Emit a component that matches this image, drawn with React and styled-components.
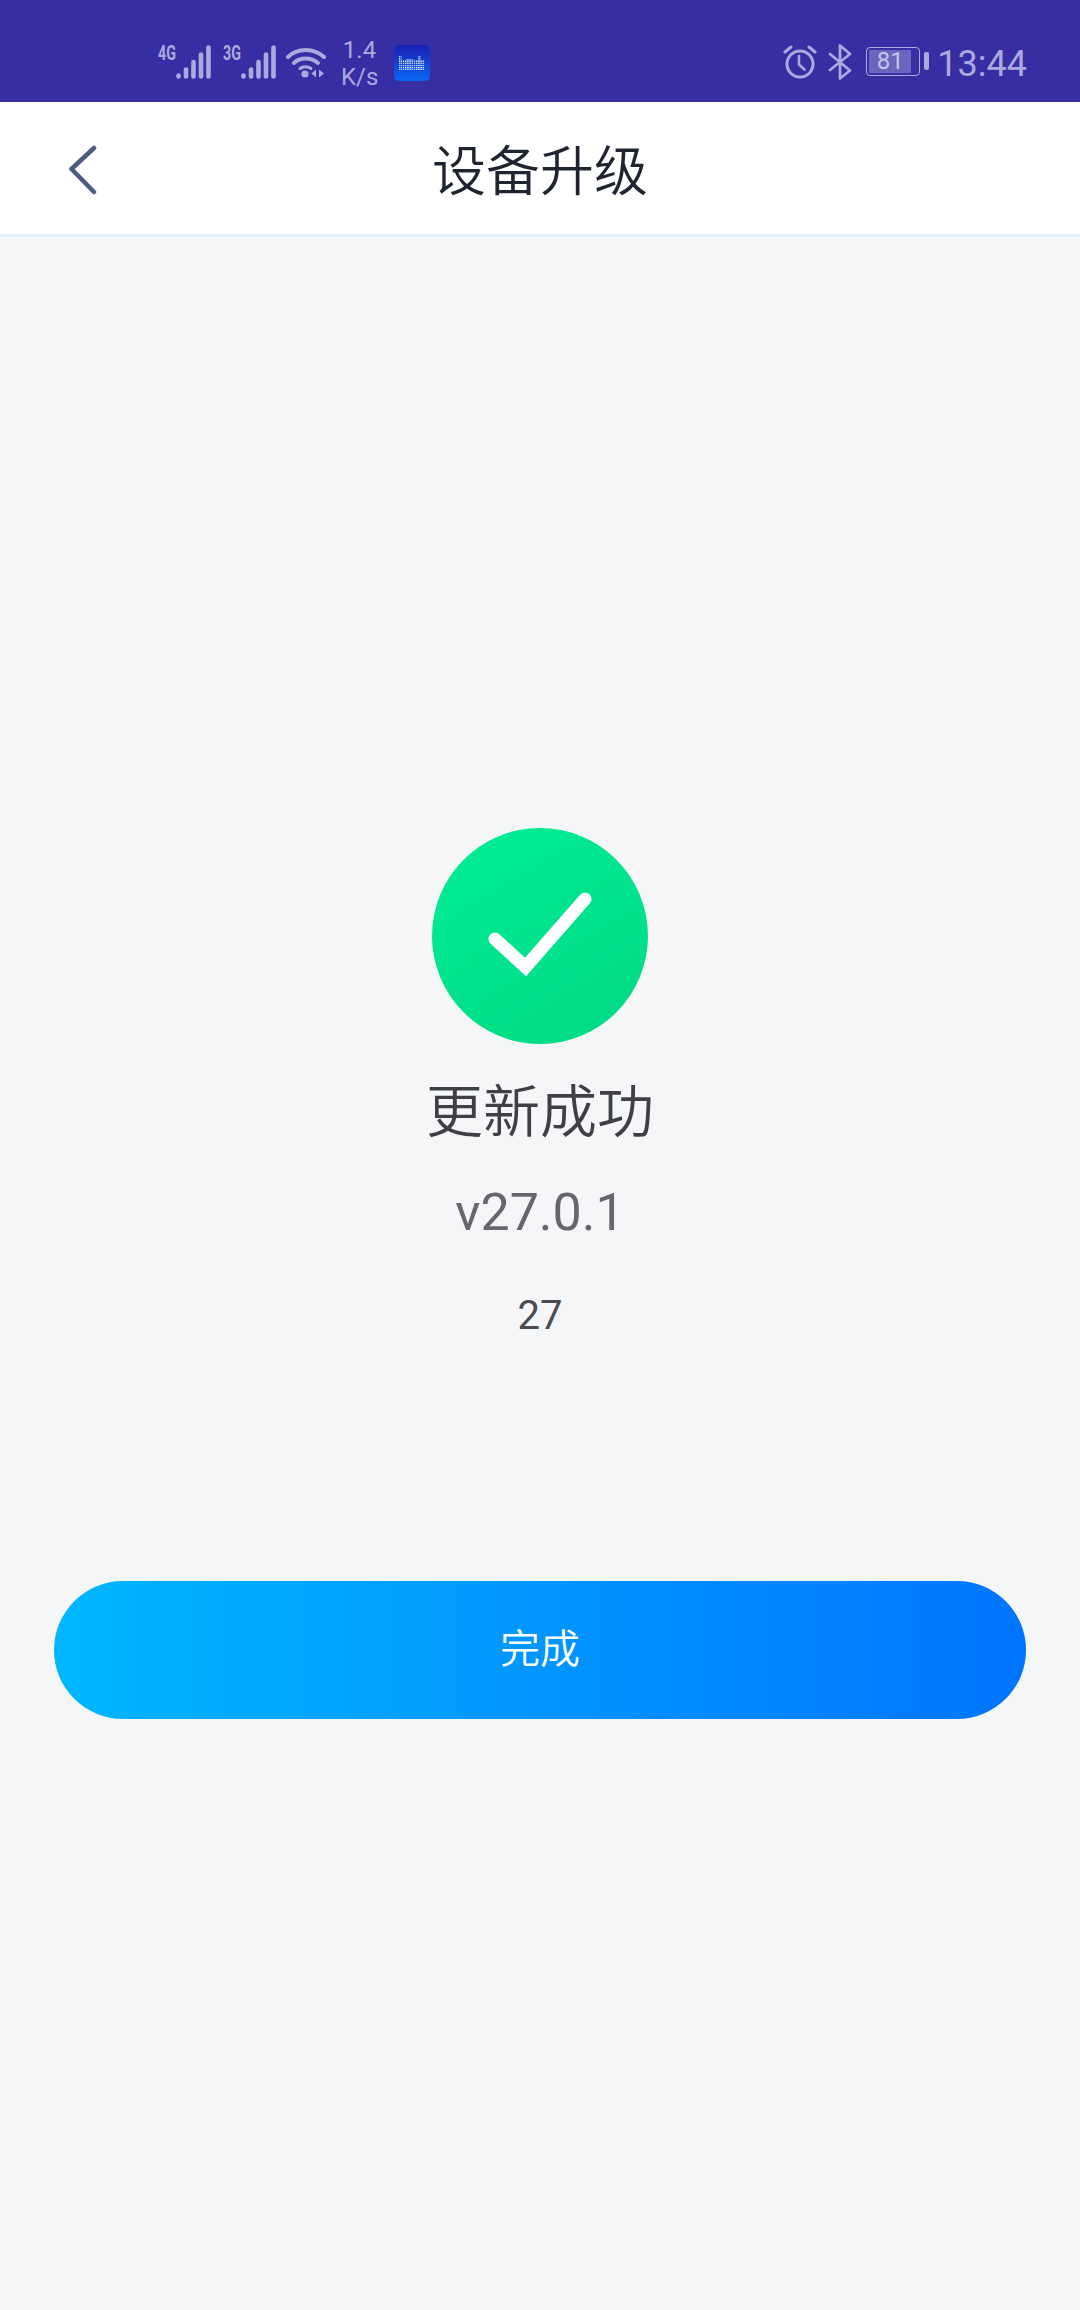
import React from "react";
import styled, { createGlobalStyle } from "styled-components";

const Global = createGlobalStyle`
  html, body { margin: 0; padding: 0; background: #f4f6f8; }
  body { font-family: Roboto, "Noto Sans CJK SC", sans-serif; }
  * { box-sizing: border-box; }
`;

const Page = styled.div`
  width: 1080px;
  height: 2310px;
  display: flex;
  flex-direction: column;
  background: #f4f6f8;
  overflow: hidden;
`;

const StatusBar = styled.div`
  height: 102px;
  flex: none;
  background: #382ea3;
  color: #aaaade;
  display: flex;
  justify-content: space-between;
  padding: 40px 54px 0 158px;
`;

const StatusGroup = styled.div`
  display: flex;
  align-items: flex-start;
`;

const SignalBlock = styled.div`
  display: flex;
  align-items: flex-start;
  width: 54px;
  height: 34px;
  margin: 5px ${(p) => p.$right}px 0 0;
  flex: none;
`;

const SignalLabel = styled.span`
  width: 18px;
  flex: none;
  font-size: 21px;
  font-weight: 700;
  line-height: 16px;
  white-space: nowrap;
  transform: scaleX(0.68);
  transform-origin: left center;
`;

const SignalBars = styled.svg`
  width: 36px;
  height: 34px;
  flex: none;
`;

const WifiIcon = styled.svg`
  width: 40px;
  height: 32px;
  margin: 6px 15px 0 -1px;
  flex: none;
`;

const NetSpeed = styled.div`
  width: 37px;
  margin: -3px 16px 0 0;
  text-align: center;
  font-size: 24px;
  line-height: 27px;
  white-space: nowrap;
`;

const AppIcon = styled.svg`
  width: 36px;
  height: 36px;
  margin-top: 5px;
  flex: none;
`;

const AlarmIcon = styled.svg`
  width: 34px;
  height: 34px;
  margin: 5px 11px 0 0;
  flex: none;
`;

const BluetoothIcon = styled.svg`
  width: 24px;
  height: 36px;
  margin: 4px 14px 0 0;
  flex: none;
`;

const Battery = styled.div`
  position: relative;
  width: 54px;
  height: 29px;
  margin: 7px 17px 0 0;
  border: 1.5px solid #aaaade;
  border-radius: 4px;
  padding: 2px;
  flex: none;
`;

const BatteryFill = styled.div`
  width: 42px;
  height: 100%;
  background: #6a66bd;
  border-radius: 1px;
  text-align: center;
  font-size: 24px;
  line-height: 23px;
  color: #c5c5ea;
`;

const BatteryCap = styled.span`
  position: absolute;
  right: -10px;
  top: 4px;
  width: 5px;
  height: 18px;
  border-radius: 2px;
  background: #aaaade;
`;

const Clock = styled.div`
  font-size: 36px;
  line-height: 42px;
  margin-top: 3px;
  margin-right: -1px;
`;

const Header = styled.header`
  height: 135px;
  flex: none;
  background: #fff;
  border-bottom: 3px solid #e0eefb;
  display: grid;
  grid-template-columns: 160px 1fr 160px;
  align-items: center;
`;

const BackIcon = styled.svg`
  width: 32px;
  height: 52px;
  margin: 2px 0 0 66px;
  display: block;
`;

const Title = styled.h1`
  margin: 0;
  text-align: center;
  font-size: 54px;
  font-weight: 350;
  line-height: 66px;
  color: #1f2530;
  font-family: "Noto Sans CJK SC", sans-serif;
`;

const Main = styled.main`
  flex: 1;
  display: flex;
  flex-direction: column;
  align-items: center;
  padding: 591px 54px 0;
`;

const SuccessBadge = styled.svg`
  width: 216px;
  height: 216px;
  display: block;
`;

const Heading = styled.div`
  margin-top: 28px;
  font-family: "Noto Sans CJK SC", sans-serif;
  font-size: 57px;
  font-weight: 350;
  line-height: 70px;
  color: #3e4044;
`;

const Version = styled.div`
  margin-top: 41px;
  font-size: 52px;
  line-height: 60px;
  color: #65676c;
`;

const Build = styled.div`
  margin-top: 49px;
  font-size: 40px;
  line-height: 48px;
  color: #4a4c51;
`;

const DoneButton = styled.button`
  margin-top: 241px;
  width: 972px;
  height: 138px;
  border: 0;
  border-radius: 69px;
  background: linear-gradient(90deg, #00b7ff 0%, #0074ff 100%);
  color: #fff;
  font-family: "Noto Sans CJK SC", sans-serif;
  font-weight: 350;
  font-size: 40px;
  padding: 0 0 8px;
`;

function Signal({ label, right }) {
  return (
    <SignalBlock $right={right}>
      <SignalLabel>{label}</SignalLabel>
      <SignalBars viewBox="18 0 36 34">
        <g stroke="#aaaade" strokeWidth="4.6" strokeLinecap="round">
          <path d="M20.5 30.5v1" />
          <path d="M28 24.5v7" />
          <path d="M35.5 17v14.5" />
          <path d="M43 9.5v22" />
          <path d="M50.5 2.5v29" />
        </g>
      </SignalBars>
    </SignalBlock>
  );
}

export default function App() {
  return (
    <Page>
      <Global />
      <StatusBar>
        <StatusGroup>
          <Signal label="4G" right={11} />
          <Signal label="3G" right={10} />
          <WifiIcon viewBox="0 0 40 32" fill="none" stroke="#aaaade" strokeLinecap="round">
            <path d="M2 11C11 1.5 28 1.5 38 11" strokeWidth="4" />
            <path d="M8 17C14 11 25 11 32 17" strokeWidth="4" />
            <path d="M14 22.5c3-2.5 8-2.5 11 0" strokeWidth="3" />
            <circle cx="19" cy="28" r="3.6" fill="#aaaade" stroke="none" />
            <path d="M30 23.500v8l-4.500-4zM33 23.500v8l5-4z" fill="#aaaade" stroke="none" />
          </WifiIcon>
          <NetSpeed>1.4<br />K/s</NetSpeed>
          <AppIcon viewBox="0 0 36 36">
            <defs>
              <linearGradient id="appBg" x1="0" y1="0" x2="0" y2="1">
                <stop offset="0" stopColor="#1a1fb0" />
                <stop offset="1" stopColor="#0a66f5" />
              </linearGradient>
              <pattern id="dots" width="2.2" height="2.2" patternUnits="userSpaceOnUse">
                <rect width="1.4" height="1.4" fill="#d6ebff" />
              </pattern>
            </defs>
            <rect width="36" height="36" rx="5" fill="url(#appBg)" />
            <path d="M5 11h2.400v4H12v-1h8v1h4.400v-4h2.200v4h4.400V25H5z" fill="url(#dots)" />
          </AppIcon>
        </StatusGroup>
        <StatusGroup>
          <AlarmIcon viewBox="0 0 34 34" fill="none" stroke="#aaaade" strokeLinecap="round" strokeLinejoin="round">
            <circle cx="17" cy="19" r="13" strokeWidth="3" />
            <path d="M16 11v8.5l5.5 5" strokeWidth="2.6" />
            <path d="M2 7l6-5M32 7l-6-5" strokeWidth="3" />
          </AlarmIcon>
          <BluetoothIcon viewBox="0 0 24 36" fill="none" stroke="#aaaade" strokeWidth="2.8" strokeLinejoin="round" strokeLinecap="round">
            <path d="M2 10l20 16.500-10 8V1.500l10 8.500L2 26" />
          </BluetoothIcon>
          <Battery>
            <BatteryFill>81</BatteryFill>
            <BatteryCap />
          </Battery>
          <Clock>13:44</Clock>
        </StatusGroup>
      </StatusBar>
      <Header>
        <BackIcon viewBox="0 0 32 52" fill="none" stroke="#4d5b80" strokeWidth="4.500" strokeLinecap="round" strokeLinejoin="round">
          <path d="M28 5 L5.500 26 L28 49" />
        </BackIcon>
        <Title>设备升级</Title>
      </Header>
      <Main>
        <SuccessBadge viewBox="0 0 216 216">
          <defs>
            <linearGradient id="okBg" x1="0.2" y1="0" x2="0.8" y2="1">
              <stop offset="0" stopColor="#00ec94" />
              <stop offset="1" stopColor="#00da84" />
            </linearGradient>
          </defs>
          <circle cx="108" cy="108" r="108" fill="url(#okBg)" />
          <path d="M63 111 L93.500 139 L153 71" fill="none" stroke="#fff" strokeWidth="13" strokeLinecap="round" strokeLinejoin="miter" />
        </SuccessBadge>
        <Heading>更新成功</Heading>
        <Version>v27.0.1</Version>
        <Build>27</Build>
        <DoneButton>完成</DoneButton>
      </Main>
    </Page>
  );
}
